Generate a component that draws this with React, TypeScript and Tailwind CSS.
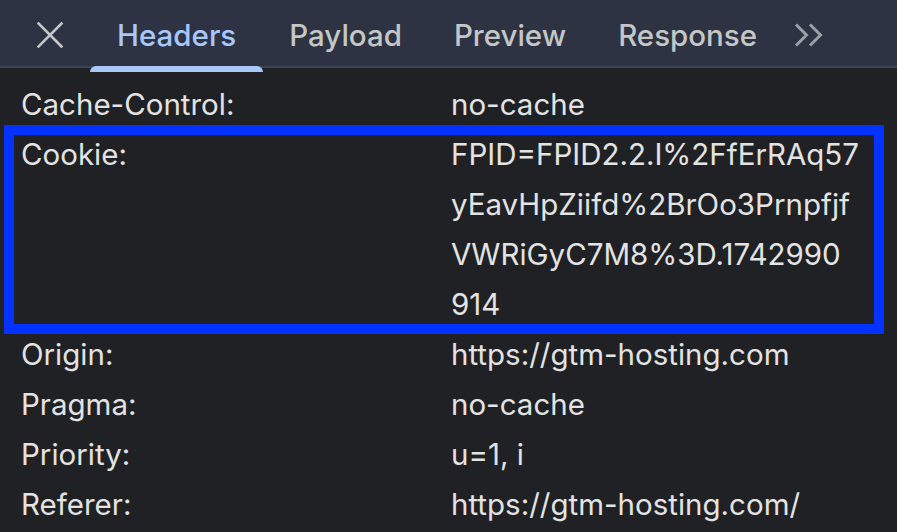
import React from "react";

const font = { fontFamily: "Inter, 'Noto Sans', sans-serif" };

function Row({ label, children }: { label: string; children: React.ReactNode }) {
  return (
    <div className="flex h-[50px] items-center pl-[21px]">
      <div className="w-[430px] shrink-0">{label}</div>
      <div>{children}</div>
    </div>
  );
}

export default function App() {
  const cookieLines = [
    "FPID=FPID2.2.I%2FfErRAq57",
    "yEavHpZiifd%2BrOo3Prnpfjf",
    "VWRiGyC7M8%3D.1742990",
    "914",
  ];
  return (
    <div className="w-[897px] h-[532px] overflow-hidden bg-[#202124] flex flex-col" style={font}>
      {/* Tab bar */}
      <div className="h-[68px] shrink-0 bg-[#2d3343] border-b-2 border-[#3d4455] flex items-center pt-[4px] text-[29.5px] font-medium text-[#c4c7c5]">
        <svg className="ml-[37px] shrink-0" width="26" height="26" viewBox="0 0 26 26">
          <path d="M1.5 1.5 L24.5 24.5 M24.5 1.5 L1.5 24.5" stroke="#c4c7c5" strokeWidth="2.6" strokeLinecap="square" />
        </svg>
        <div className="relative ml-[27px] px-[27px] h-[62px] flex items-center text-[#a8c7fa]">
          Headers
          <div className="absolute left-0 right-0 bottom-[-6px] h-[6px] rounded-t-[6px] bg-[#a8c7fa]" />
        </div>
        <div className="px-[26px]">Payload</div>
        <div className="px-[26px]">Preview</div>
        <div className="px-[26px]">Response</div>
        <svg className="ml-[11px] shrink-0" width="30" height="24" viewBox="0 0 30 24">
          <path d="M2 1.5 L12.5 12 L2 22.5 M16 1.5 L26.5 12 L16 22.5" fill="none" stroke="#9aa0a6" strokeWidth="3" />
        </svg>
      </div>

      {/* Headers list */}
      <div className="flex-1 overflow-hidden text-[29.5px] text-[#e3e3e3]">
        <div className="mt-[-43px]">
          <Row label="Accept-Encoding:">gzip, deflate, br, zstd</Row>
          <div className="h-[4px]" />
          <Row label="Cache-Control:">no-cache</Row>
          <div className="relative">
            <div className="flex pl-[21px]">
              <div className="w-[430px] shrink-0 h-[50px] flex items-center">Cookie:</div>
              <div className="flex flex-col">
                {cookieLines.map((l) => (
                  <div key={l} className="h-[50px] flex items-center">
                    {l}
                  </div>
                ))}
              </div>
            </div>
            <div className="absolute left-[4px] top-[-4px] w-[880px] h-[209px] border-[10px] border-[#0433ff]" />
          </div>
          <Row label="Origin:">https://gtm-hosting.com</Row>
          <Row label="Pragma:">no-cache</Row>
          <Row label="Priority:">u=1, i</Row>
          <Row label="Referer:">https://gtm-hosting.com/</Row>
        </div>
      </div>
    </div>
  );
}
